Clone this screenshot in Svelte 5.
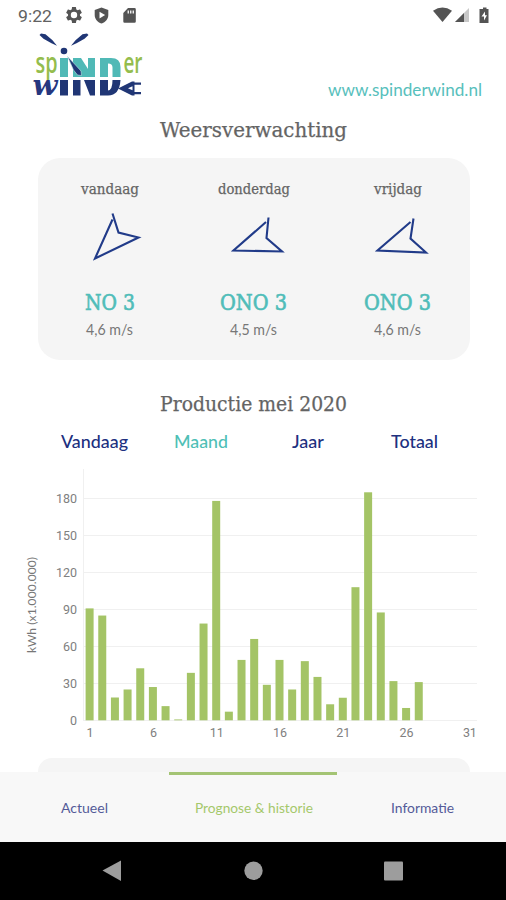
<script>
  const forecast = [
    { day: 'vandaag', dayWidth: 58, wind: 'NO 3', windWidth: 50, speed: '4,6 m/s', arrow: 'M25.5 8.5 L8 47.5 L51.5 26.5 L31.500 21.5 L25.5 2.5' },
    { day: 'donderdag', dayWidth: 72, wind: 'ONO 3', windWidth: 67, speed: '4,5 m/s', arrow: 'M35 11 L2.5 39.5 L51 40.5 L35.5 27 L37.5 6.5' },
    { day: 'vrijdag', dayWidth: 48, wind: 'ONO 3', windWidth: 67, speed: '4,6 m/s', arrow: 'M35.5 11 L2.5 39.5 L51 41.5 L35.5 27.5 L38.5 7.5' }
  ];
  const periods = [
    { label: 'Vandaag', width: 67, left: 60.5 },
    { label: 'Maand', width: 54, left: 46 },
    { label: 'Jaar', width: 32, left: 64 },
    { label: 'Totaal', width: 47, left: 67 }
  ];
  const tabs = [
    { label: 'Actueel', width: 47 },
    { label: 'Prognose & historie', width: 118 },
    { label: 'Informatie', width: 63 }
  ];
  const production = [90.8, 85, 18.5, 25, 42.2, 27, 11.5, 0.7, 38.5, 78.5, 178, 7, 49, 66, 28.8, 49, 25, 48, 35.2, 13, 18.3, 108, 185, 87.5, 31.8, 10, 31];
  const ticks = [0, 30, 60, 90, 120, 150, 180];
  const days = [1, 6, 11, 16, 21, 26, 31];
  const base = 260.3;
  const yOf = (v) => base - v * 1.2325;
  const xOf = (d) => 89.6 + (d - 1) * 12.66;
</script>

{#snippet fitted(text, width, size, kind)}
  <svg class="fitted {kind}" {width} height={size * 1.5} aria-label={text}>
    <text x="0" y={size * 1.1} font-size={size} textLength={width} lengthAdjust="spacingAndGlyphs">{text}</text>
  </svg>
{/snippet}

<main class="screen">
  <div class="status">
    {@render fitted('9:22', 34, 17, 'clock')}
    <svg class="gear" width="16" height="16" viewBox="2 2 20 20">
      <path fill-rule="evenodd" d="M19.43 12.98c.04-.32.07-.64.07-.98s-.03-.66-.07-.98l2.11-1.65c.19-.15.24-.42.12-.64l-2-3.46c-.12-.22-.39-.3-.61-.22l-2.49 1c-.52-.4-1.08-.73-1.69-.98l-.38-2.65A.49.49 0 0 0 14 2h-4c-.25 0-.46.18-.49.42l-.38 2.65c-.61.25-1.17.59-1.69.98l-2.49-1c-.23-.09-.49 0-.61.22l-2 3.46c-.13.22-.07.49.12.64l2.11 1.65c-.04.32-.07.65-.07.98s.03.66.07.98l-2.11 1.65c-.19.15-.24.42-.12.64l2 3.46c.12.22.39.3.61.22l2.49-1c.52.4 1.08.73 1.69.98l.38 2.65c.03.24.24.42.49.42h4c.25 0 .46-.18.49-.42l.38-2.65c.61-.25 1.17-.59 1.69-.98l2.49 1c.23.09.49 0 .61-.22l2-3.46c.12-.22.07-.49-.12-.64zM12 16a4 4 0 1 1 0-8 4 4 0 0 1 0 8z"/>
    </svg>
    <svg class="shield" width="15" height="17" viewBox="0 0 15 17">
      <path fill-rule="evenodd" d="M7.5 0.5L14.300 3v5c0 4-2.700 7.200-6.800 8.500C3.400 15.200.7 12 .7 8V3zM5.500 4.800v6.600l5.600-3.300z"/>
    </svg>
    <svg class="card-icon" width="13" height="15" viewBox="0 0 13 15">
      <path fill-rule="evenodd" d="M5 0h6.500q1.300 0 1.300 1.300v12.200q0 1.300-1.300 1.300h-10Q.3 14.800.3 13.500V5zM4.600 2.500v3h1.300v-3zM7.100 2.500v3h1.300v-3zM9.600 2.500v3h1.300v-3z"/>
    </svg>
    <svg class="signals" width="57" height="17" viewBox="0 0 57 17">
      <path d="M0 3.800Q9.500-2.600 19 3.800L9.500 15z"/>
      <path fill="#c8c8c8" d="M36 1v14H22z"/>
      <path d="M31 6v9h-9z"/>
      <path d="M48 2h2V.5h3.500V2h2v14H46.500V2z"/>
      <path fill="#fff" d="M52 4.500l-3.500 5H51v4l3-5.200h-2z"/>
    </svg>
  </div>

  <header>
    <svg class="logo" width="120" height="66" viewBox="0 0 120 66">
      <text class="narrow" x="5.500" y="40.500" textLength="22" lengthAdjust="spacingAndGlyphs">sp</text>
      <text class="narrow" x="93.500" y="40.500" textLength="19" lengthAdjust="spacingAndGlyphs">er</text>
      <g class="teal">
        <path d="M30 26h8v19h-8zM43 26h8l7 11v-11h7v19H43z"/>
        <path fill-rule="evenodd" d="M70 26h11q9.500 0 9.500 9v10H70zM78 31.500v13.500h4.500V35.500q0-4-4.500-4z"/>
      </g>
      <text class="slab" x="2.500" y="63" textLength="25" lengthAdjust="spacingAndGlyphs">w</text>
      <g class="navy">
        <path d="M30 48h8v15.500h-8zM43 48h7.500v15.500H43zM54 48h11v15.500h-5zM70 48h20.500q-1 15.500-12.500 15.500h-8zM78 48v10.500q4.500-.5 4.500-10.500z" fill-rule="evenodd"/>
        <path d="M9.500 3l1.500-1.500 4.500.7 7 6 4.500 5.500-5.500-2.500-8-4.500zM58.500 3l-1.500-1.500-4.500.7-7 6-4.500 5.500 5.500-2.500 8-4.500z"/>
        <circle cx="34" cy="19" r="3.300"/>
        <path class="blade" d="M37.500 24.500l8 8.500 5.500 6 .5 4.500-4-.5-4-5z"/>
        <path d="M88 56.500l14-7h2.500v14H102z"/>
        <path d="M104 50.500h7v2.200h-7zM104 60h7v2.200h-7z"/>
        <path fill="#fff" d="M98 56.300l4.500-2v4z"/>
      </g>
    </svg>
    <a class="site" href="#site">{@render fitted('www.spinderwind.nl', 154, 17, 'link')}</a>
  </header>

  <h1>{@render fitted('Weersverwachting', 187, 20, 'heading')}</h1>
  <section class="weather">
    {#each forecast as f}
      <div class="day">
        <div class="name">{@render fitted(f.day, f.dayWidth, 14, 'heading')}</div>
        <svg class="arrow" width="56" height="50" viewBox="0 0 56 50"><path d={f.arrow}/></svg>
        <div class="wind">{@render fitted(f.wind, f.windWidth, 23, 'direction')}</div>
        <div class="speed">{@render fitted(f.speed, 47, 14.5, 'meters')}</div>
      </div>
    {/each}
  </section>

  <h2>{@render fitted('Productie mei 2020', 187, 20, 'heading')}</h2>
  <nav class="periods">
    {#each periods as p, i}
      <div class:chosen={i === 1} style:margin-left="{p.left}px">{@render fitted(p.label, p.width, 17, 'period')}</div>
    {/each}
  </nav>

  <svg class="chart" width="506" height="298" viewBox="0 0 506 298">
    <path class="grid" d="M83.500 9V260"/>
    {#each ticks as t}
      <path class="grid" d="M83 {Math.floor(yOf(t)) + 0.5}H477"/>
      <text class="tick" x="77" y={yOf(t) + 4.4} text-anchor="end" textLength={t > 99 ? 21 : t > 9 ? 14 : 7}>{t}</text>
    {/each}
    {#each production as v, i}
      <rect x={xOf(i + 1) - 4} y={yOf(v)} width="8" height={base - yOf(v)}/>
    {/each}
    {#each days as d}
      <text class="tick" x={xOf(d) + 0.5} y="277" text-anchor="middle" textLength={d > 9 ? 14 : 7}>{d}</text>
    {/each}
    <text class="unit" transform="translate(35.500 193) rotate(-90)" textLength="96">kWh (x1.000.000)</text>
  </svg>
  <section class="next"></section>

  <nav class="tabs">
    {#each tabs as t, i}
      <div class="tab" class:active={i === 1}>{@render fitted(t.label, t.width, 13.5, 'tab-label')}</div>
    {/each}
  </nav>
  <footer>
    <svg width="506" height="58" viewBox="0 0 506 58">
      <path d="M102.500 28.500L121 18.500v20.500z"/>
      <circle cx="253.500" cy="28.800" r="9.200"/>
      <rect x="384" y="19.500" width="19" height="19" rx="1"/>
    </svg>
  </footer>
</main>

<style>
  .screen { width: 506px; height: 900px; overflow: hidden; display: flex; flex-direction: column; background: #fff; color: #646464; font-family: Lato, sans-serif; }
  svg { display: block; flex: none; }
  .fitted, .logo { overflow: visible; }
  .fitted { fill: currentColor; }
  .status { height: 32px; flex: none; box-sizing: border-box; padding: 6px 16px 0 18px; display: flex; align-items: flex-start; fill: #545454; }
  .clock { color: #616161; font-family: Roboto, sans-serif; margin-top: -3px; }
  .gear { margin: 1px 0 0 14px; }
  .shield { margin: 1px 0 0 12px; }
  .card-icon { margin: 2px 0 0 13.500px; }
  .signals { margin: 1px 0 0 auto; }
  header { height: 78px; flex: none; display: flex; }
  .logo { margin-left: 30px; }
  .narrow { font: 600 28px "Open Sans", sans-serif; fill: #94bd4d; }
  .slab { font: italic 700 28px "DejaVu Serif", serif; fill: #26377f; }
  .teal { fill: #50b9b6; }
  .navy { fill: #203675; }
  .blade { stroke: #bfe5e2; stroke-width: 0.600; }
  .site { color: #57c0bc; margin: 45px 0 0 178px; }
  h1, h2 { font-weight: 400; margin: 0; flex: none; display: flex; justify-content: center; }
  h1 { height: 48px; padding: 4.500px 0 0 1px; box-sizing: border-box; }
  h2 { height: 68px; padding: 28.500px 0 0 1px; box-sizing: border-box; }
  .heading { font-family: "DejaVu Serif", serif; }
  .heading text { stroke: currentColor; stroke-width: 0.250; }
  .weather { height: 202px; width: 432px; margin-left: 38px; flex: none; background: #f5f5f5; border-radius: 22px; display: flex; }
  .day { width: 144px; display: flex; flex-direction: column; align-items: center; padding-right: 1px; box-sizing: border-box; }
  .name { height: 32px; margin-top: 21px; }
  .arrow { margin-left: 10px; }
  .arrow path { fill: none; stroke: #213b89; stroke-width: 2.100; stroke-linejoin: miter; }
  .wind { height: 33px; margin-top: 24px; color: #50bdb9; }
  .direction { font-family: "DejaVu Serif", serif; }
  .direction text { stroke: currentColor; stroke-width: 0.700; }
  .speed { color: #777; margin-top: 1px; }
  .periods { height: 32px; flex: none; display: flex; color: #20307f; }
  .period { font-weight: 500; margin-top: 0.500px; }
  .chosen { color: #4fbfb6; }
  .grid { fill: none; stroke: #f0f0f0; stroke-width: 1; }
  .chart rect { fill: #a4c466; }
  .tick { font-family: Roboto, sans-serif; font-size: 12.500px; fill: #808080; }
  .unit { font-size: 12px; fill: #777; }
  .next { height: 14px; width: 432px; flex: none; margin-left: 38px; background: #f5f5f5; border-radius: 20px 20px 0 0; }
  .tabs { height: 69.500px; flex: none; display: flex; background: #f8f8f8; color: #545b99; }
  .tab { width: 168.700px; box-sizing: border-box; border-top: 3px solid transparent; padding: 23px 0 0 1px; display: flex; justify-content: center; }
  .active { color: #a5c86b; border-color: #a4c474; }
  footer { flex: 1; background: #000; fill: #9d9d9d; }
</style>
